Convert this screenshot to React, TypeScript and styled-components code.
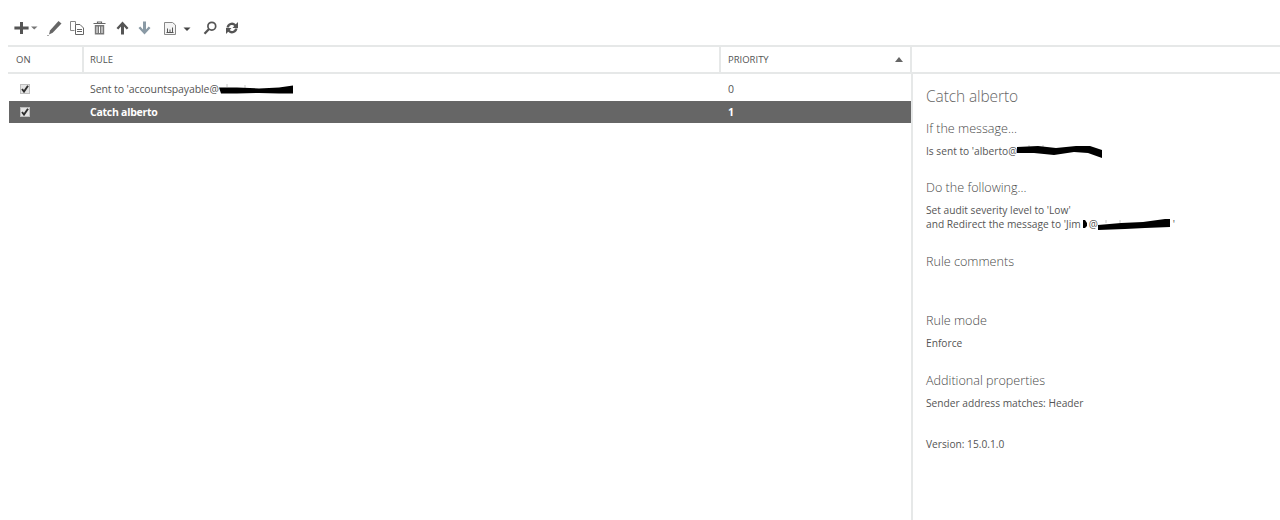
import React from 'react'
import styled, { createGlobalStyle } from 'styled-components'

const GlobalStyle = createGlobalStyle`
  html, body {
    margin: 0;
    padding: 0;
    background: #fff;
    overflow: hidden;
  }
  body {
    font-family: "Open Sans", "Noto Sans", "Liberation Sans", sans-serif;
    color: #555;
  }
`

const Page = styled.div`
  width: 1280px;
  height: 520px;
  display: flex;
  flex-direction: column;
  padding-left: 9px;
  box-sizing: border-box;
`

const Toolbar = styled.div`
  height: 45px;
  flex: none;
  display: flex;
  align-items: center;
  padding: 11px 0 0 5px;
  box-sizing: border-box;
`

const ToolIcon = styled.svg<{ $gap?: number }>`
  display: block;
  flex: none;
  margin-right: ${p => p.$gap ?? 0}px;
`

const HeaderRow = styled.div`
  height: 29px;
  flex: none;
  display: grid;
  grid-template-columns: 75px 637px 191px 1fr;
  border-top: 2px solid #e6e8e8;
  border-bottom: 2px solid #e6e8e8;
  margin-left: -1px;
  padding-left: 1px;
  box-sizing: border-box;
`

const HeaderCell = styled.div<{ $inset?: number }>`
  display: flex;
  align-items: center;
  justify-content: space-between;
  padding: 0 9px 0 ${p => p.$inset ?? 7}px;
  font-size: 9.5px;
  color: #555;
  border-right: 2px solid #e6e8e8;
  box-sizing: border-box;
  &:last-child {
    border-right: none;
  }
`

const SortArrow = styled.span`
  width: 0;
  height: 0;
  margin-right: -2px;
  border-left: 4px solid transparent;
  border-right: 4px solid transparent;
  border-bottom: 5px solid #666;
`

const Body = styled.div`
  flex: 1;
  display: flex;
  min-height: 0;
`

const List = styled.div`
  width: 902px;
  flex: none;
  padding-top: 5px;
  box-sizing: border-box;
`

const Row = styled.div<{ $selected?: boolean }>`
  display: grid;
  grid-template-columns: 75px 637px 190px;
  height: 22px;
  padding-bottom: ${p => (p.$selected ? 0 : 2)}px;
  box-sizing: border-box;
  align-items: center;
  font-size: 10.5px;
  font-weight: ${p => (p.$selected ? 700 : 400)};
  letter-spacing: ${p => (p.$selected ? '-0.25px' : '-0.1px')};
  color: ${p => (p.$selected ? '#fff' : '#555')};
  background: ${p => (p.$selected ? '#666' : 'transparent')};
`

const CheckCell = styled.div`
  padding-left: 11px;
  display: flex;
`

const CheckBox = styled.span`
  width: 10px;
  height: 10px;
  background: #e4e4e4;
  border: 1px solid #bdbdbd;
  box-sizing: border-box;
  display: flex;
  align-items: center;
  justify-content: center;
`

const TextCell = styled.div<{ $inset: number }>`
  padding-left: ${p => p.$inset}px;
  display: flex;
  align-items: center;
  white-space: nowrap;
`

const Redacted = styled.svg`
  display: block;
  flex: none;
`

const Details = styled.aside`
  flex: 1;
  border-left: 2px solid #e6e8e8;
  padding: 12px 0 0 13px;
  box-sizing: border-box;
`

const Title = styled.h1`
  margin: 0;
  font-size: 15.5px;
  line-height: 20px;
  font-weight: 300;
  letter-spacing: -0.1px;
  color: #666;
`

const Section = styled.section<{ $top: number }>`
  margin-top: ${p => p.$top}px;
`

const Heading = styled.h2`
  margin: 0 0 7px;
  font-size: 12.6px;
  line-height: 16px;
  font-weight: 300;
  color: #4a4a4a;
`

const Line = styled.div`
  font-size: 10.2px;
  line-height: 14px;
  height: 14px;
  color: #555;
  display: flex;
  align-items: center;
  white-space: nowrap;
`

function Check() {
  return (
    <svg width="8" height="8" viewBox="0 0 8 8">
      <path d="M1 4 L3 6.600 L7 .8" fill="none" stroke="#2e2e2e" strokeWidth="1.900" />
    </svg>
  )
}

function Scribble({ width, height, d, ticks }: { width: number; height: number; d: string; ticks?: string }) {
  return (
    <Redacted width={width} height={height} viewBox={`0 0 ${width} ${height}`}>
      {ticks && <path d={ticks} fill="none" stroke="#c8c8c8" />}
      <path d={d} fill="#000" />
    </Redacted>
  )
}

function Tools() {
  return (
    <>
      <ToolIcon $gap={2} width="15" height="14" viewBox="0 0 15 14">
        <path d="M6 1h3v4.600h5.600v2.800H9V13H6V8.400H.4V5.600H6z" fill="#555" />
      </ToolIcon>
      <ToolIcon $gap={9} width="7" height="14" viewBox="0 0 7 14">
        <path d="M0 5.500h6.500L3.250 8.500z" fill="#777" />
      </ToolIcon>
      <ToolIcon $gap={8} width="15" height="16" viewBox="0 0 15 16">
        <path d="M11.500 1l3 2.500-8.800 9.300L2 14.500l1-4.100z" fill="#666" />
        <path d="M0 15.500h2" stroke="#aaa" fill="none" />
      </ToolIcon>
      <ToolIcon $gap={9} width="14" height="14" viewBox="0 0 14 14">
        <path d="M4.500 9.500H.5V.5h5v3" fill="none" stroke="#888" />
        <path d="M5.500 3.500h4.500l3.500 3.500v6.500h-8z" fill="#fff" stroke="#666" />
        <path d="M7 8.500h5 M7 10.500h5" stroke="#666" />
      </ToolIcon>
      <ToolIcon $gap={10} width="13" height="14" viewBox="0 0 13 14">
        <path d="M.5 2.500h12 M4.500 2.500V1h4v1.500" fill="none" stroke="#666" strokeWidth="1.200" />
        <path d="M1.800 4h9.400v9.500H1.800z" fill="#777" />
        <path d="M4 5.500v6.500 M6.500 5.500v6.500 M9 5.500v6.500" stroke="#fff" />
      </ToolIcon>
      <ToolIcon $gap={9} width="13" height="14" viewBox="0 0 13 14">
        <path d="M6.500 .5L12.500 7l-1.800 1.500L8 5.600V13.500H5V5.600L2.300 8.500.5 7z" fill="#555" />
      </ToolIcon>
      <ToolIcon $gap={13} width="13" height="14" viewBox="0 0 13 14">
        <path d="M6.500 13.500L12.500 7l-1.800-1.500L8 8.400V.5H5v7.900L2.300 5.500.5 7z" fill="#8a9aa5" />
      </ToolIcon>
      <ToolIcon $gap={7} width="12" height="14" viewBox="0 0 12 14">
        <path d="M.5 1.500h8l3 2.500v9.500H.500z" fill="#f4f4f4" stroke="#888" />
        <path d="M3.500 7.500v4 M6 8.500v3 M8.500 6.500v5 M2.500 11.500h7" fill="none" stroke="#555" />
      </ToolIcon>
      <ToolIcon $gap={12} width="8" height="14" viewBox="0 0 8 14">
        <path d="M.5 6.500h7L4 10z" fill="#444" />
      </ToolIcon>
      <ToolIcon $gap={8} width="14" height="14" viewBox="0 0 14 14">
        <circle cx="8.800" cy="5.200" r="3.900" fill="none" stroke="#555" strokeWidth="1.700" />
        <path d="M6 8L1.500 12.800" stroke="#555" strokeWidth="2.200" fill="none" />
      </ToolIcon>
      <ToolIcon width="14" height="14" viewBox="0 0 14 14">
        <path d="M1.500 6.500A5.500 5.500 0 0 1 10.800 3.200L13 1V7H7.500l1.800-1.900A3 3 0 0 0 4 6.500z" fill="#555" />
        <path d="M12.500 7.500A5.500 5.500 0 0 1 3.200 10.800L1 13V7h5.500L4.700 8.900A3 3 0 0 0 10 7.500z" fill="#555" />
      </ToolIcon>
    </>
  )
}

export default function App() {
  return (
    <Page>
      <GlobalStyle />
      <Toolbar>
        <Tools />
      </Toolbar>
      <HeaderRow>
        <HeaderCell>ON</HeaderCell>
        <HeaderCell $inset={6}>RULE</HeaderCell>
        <HeaderCell>
          PRIORITY
          <SortArrow />
        </HeaderCell>
        <HeaderCell />
      </HeaderRow>
      <Body>
        <List>
          <Row>
            <CheckCell>
              <CheckBox>
                <Check />
              </CheckBox>
            </CheckCell>
            <TextCell $inset={6}>
              Sent to 'accountspayable@
              <Scribble
                width={74}
                height={10}
                d="M0 3.500L18 3.500l22 1 20-1 14-2v8H60l-20-.5-22 .5L2 9.500z"
                ticks="M8 0v3 M26 1v3"
              />
            </TextCell>
            <TextCell $inset={7}>0</TextCell>
          </Row>
          <Row $selected>
            <CheckCell>
              <CheckBox>
                <Check />
              </CheckBox>
            </CheckCell>
            <TextCell $inset={6}>Catch alberto</TextCell>
            <TextCell $inset={7}>1</TextCell>
          </Row>
        </List>
        <Details>
          <Title>Catch alberto</Title>
          <Section $top={15}>
            <Heading>If the message...</Heading>
            <Line>
              Is sent to 'alberto@
              <Scribble
                width={86}
                height={13}
                d="M0 2l21 -1 18 2 20-2 14 0 12 4v8l-14-5-14-1-20 3-20-2-17 0z"
                ticks="M12 0v2 M26 0v3"
              />
            </Line>
          </Section>
          <Section $top={22}>
            <Heading>Do the following...</Heading>
            <Line>Set audit severity level to 'Low'</Line>
            <Line>
              and Redirect the message to 'Jim
              <Scribble width={8} height={10} d="M2 1h2l2 3v3l-2 2H2z" />
              @
              <Scribble
                width={75}
                height={11}
                d="M0 6l23-2 22-1 22-3 5 0v8l-25 1-20 1-27 1z"
                ticks="M8 1v3 M22 1v3"
              />
              '
            </Line>
          </Section>
          <Section $top={23}>
            <Heading>Rule comments</Heading>
          </Section>
          <Section $top={43}>
            <Heading>Rule mode</Heading>
            <Line>Enforce</Line>
          </Section>
          <Section $top={23}>
            <Heading>Additional properties</Heading>
            <Line>Sender address matches: Header</Line>
          </Section>
          <Section $top={27}>
            <Line>Version: 15.0.1.0</Line>
          </Section>
        </Details>
      </Body>
    </Page>
  )
}
